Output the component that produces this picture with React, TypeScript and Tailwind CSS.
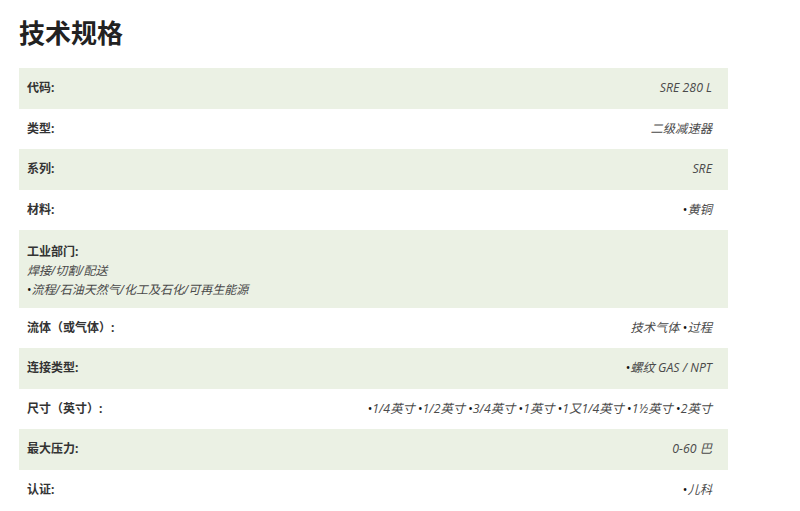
import React from "react";

const font = { fontFamily: '"Open Sans", "Noto Sans CJK SC", sans-serif' };

type Row = { label: string; value?: string; sub?: string[] };

const rows: Row[] = [
  { label: "代码:", value: "SRE 280 L" },
  { label: "类型:", value: "二级减速器" },
  { label: "系列:", value: "SRE" },
  { label: "材料:", value: "•黄铜" },
  { label: "工业部门:", sub: ["焊接/切割/配送", "•流程/石油天然气/化工及石化/可再生能源"] },
  { label: "流体（或气体）:", value: "技术气体 •过程" },
  { label: "连接类型:", value: "•螺纹 GAS / NPT" },
  { label: "尺寸（英寸）:", value: "•1/4英寸 •1/2英寸 •3/4英寸 •1英寸 •1又1/4英寸 •1½英寸 •2英寸" },
  { label: "最大压力:", value: "0-60 巴" },
  { label: "认证:", value: "•儿科" },
];

function Val({ text }: { text: string }) {
  const parts = text.split("•");
  return (
    <>
      {parts.map((p, i) => (
        <React.Fragment key={i}>
          {i > 0 && <span className="not-italic text-[#111]">•</span>}
          {p}
        </React.Fragment>
      ))}
    </>
  );
}

export default function App() {
  return (
    <div className="w-[800px] h-[511px] bg-white overflow-hidden" style={font}>
      <h1 className="pl-[19px] pt-[16px] text-[26px] leading-[34px] font-bold text-[#222]">技术规格</h1>
      <div className="ml-[19px] mt-[18px] w-[709px]">
        {rows.map((r, i) => {
          const bg = i % 2 === 0 ? "bg-[#ebf1e4]" : "bg-white";
          if (r.sub) {
            return (
              <div key={i} className={`${bg} h-[77.5px] pl-[8px] pt-[12px] text-[12px] leading-[19px]`}>
                <div className="font-bold text-[#333]">{r.label}</div>
                {r.sub.map((s, j) => (
                  <div key={j} className="italic text-[#4a4a4a]">
                    <Val text={s} />
                  </div>
                ))}
              </div>
            );
          }
          return (
            <div key={i} className={`${bg} h-[40.5px] flex items-center justify-between pl-[8px] pr-[16px]`}>
              <span className="text-[12px] font-bold text-[#333]">{r.label}</span>
              <span className="text-[12.3px] italic text-[#4a4a4a]">
                <Val text={r.value || ""} />
              </span>
            </div>
          );
        })}
      </div>
    </div>
  );
}
